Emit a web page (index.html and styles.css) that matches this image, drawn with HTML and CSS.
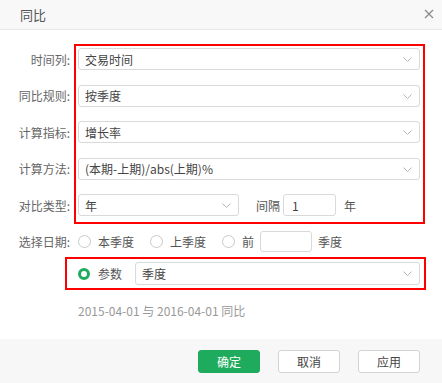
FILE: index.html
```html
<!DOCTYPE html>
<html lang="zh">
<head>
  <meta charset="UTF-8">
  <title>同比</title>
  <link rel="stylesheet" href="styles.css">
</head>
<body>
  <div class="dialog">
    <div class="head">
      <span class="title">同比</span>
      <svg class="close" width="10" height="10" viewBox="0 0 10 10"><path d="M1 1L9 9M9 1L1 9" stroke="#888" stroke-width="1.2"/></svg>
    </div>

    <div class="body">
      <div class="mark mark-a"></div>
      <div class="mark mark-b"></div>

      <div class="row">
        <label class="lbl">时间列:</label>
        <div class="select">交易时间<svg class="chev" width="9" height="5" viewBox="0 0 9 5"><path d="M0.5 0.5L4.5 4.5L8.5 0.5" fill="none" stroke="#b5b5b5"/></svg></div>
      </div>
      <div class="row">
        <label class="lbl">同比规则:</label>
        <div class="select">按季度<svg class="chev" width="9" height="5" viewBox="0 0 9 5"><path d="M0.5 0.5L4.5 4.5L8.5 0.5" fill="none" stroke="#b5b5b5"/></svg></div>
      </div>
      <div class="row">
        <label class="lbl">计算指标:</label>
        <div class="select">增长率<svg class="chev" width="9" height="5" viewBox="0 0 9 5"><path d="M0.5 0.5L4.5 4.5L8.5 0.5" fill="none" stroke="#b5b5b5"/></svg></div>
      </div>
      <div class="row">
        <label class="lbl">计算方法:</label>
        <div class="select">(本期-上期)/abs(上期)%<svg class="chev" width="9" height="5" viewBox="0 0 9 5"><path d="M0.5 0.5L4.5 4.5L8.5 0.5" fill="none" stroke="#b5b5b5"/></svg></div>
      </div>
      <div class="row">
        <label class="lbl">对比类型:</label>
        <div class="inline">
          <div class="select short">年<svg class="chev" width="9" height="5" viewBox="0 0 9 5"><path d="M0.5 0.5L4.5 4.5L8.5 0.5" fill="none" stroke="#b5b5b5"/></svg></div>
          <span class="txt gap-l">间隔</span>
          <div class="input num">1</div>
          <span class="txt">年</span>
        </div>
      </div>
      <div class="row radio-row">
        <label class="lbl">选择日期:</label>
        <div class="inline">
          <span class="radio"></span><span class="txt rtxt">本季度</span>
          <span class="radio"></span><span class="txt rtxt">上季度</span>
          <span class="radio"></span><span class="txt rtxt pre">前</span>
          <div class="input few"></div>
          <span class="txt">季度</span>
        </div>
      </div>
      <div class="row param-row">
        <span class="lbl"></span>
        <div class="inline">
          <span class="radio on"></span><span class="txt ptxt">参数</span>
          <div class="select grow">季度<svg class="chev" width="9" height="5" viewBox="0 0 9 5"><path d="M0.5 0.5L4.5 4.5L8.5 0.5" fill="none" stroke="#b5b5b5"/></svg></div>
        </div>
      </div>
      <p class="hint">2015-04-01 与 2016-04-01 同比</p>
    </div>

    <div class="foot">
      <button class="btn primary">确定</button>
      <button class="btn">取消</button>
      <button class="btn">应用</button>
    </div>
  </div>
</body>
</html>
```

FILE: styles.css
```css
body {
    margin: 0;
    background: #ffffff;
    font-family: "Noto Sans CJK SC", "Noto Sans", sans-serif;
    font-size: 12px;
    color: #444;
}

.dialog {
    width: 442px;
    height: 383px;
    display: flex;
    flex-direction: column;
}

.head {
    height: 29px;
    background: #f8f8f8;
    border-bottom: 1px solid #e9e9e9;
    display: flex;
    align-items: center;
    justify-content: space-between;
    padding: 0 8px 0 20px;
}
.title {
    font-size: 13px;
    color: #555;
}
.close {
    margin-top: -1px;
}

.body {
    position: relative;
    flex: 1;
    padding: 18px 22px 0 0;
}

/* red highlight frames drawn over the form */
.mark {
    position: absolute;
    border: 2px solid #ff0000;
    pointer-events: none;
}
.mark-a {
    left: 74px;
    top: 14px;
    width: 347px;
    height: 176px;
}
.mark-b {
    left: 65px;
    top: 227px;
    width: 357px;
    height: 29px;
}

.row {
    display: grid;
    grid-template-columns: 70px 1fr;
    column-gap: 8px;
    align-items: center;
    height: 22px;
    margin-bottom: 14.5px;
}
.lbl {
    text-align: right;
    color: #666;
    white-space: nowrap;
}

.select {
    height: 20px;
    border: 1px solid #d9d9d9;
    border-radius: 3px;
    padding-left: 6px;
    display: flex;
    align-items: center;
    position: relative;
    color: #444;
}
.chev {
    position: absolute;
    right: 7px;
    top: 8px;
}

.inline {
    display: flex;
    align-items: center;
}
.short {
    width: 153px;
}
.grow {
    flex: 1;
}
.txt {
    color: #555;
}
.gap-l {
    margin-left: 17px;
}

.input {
    border: 1px solid #d9d9d9;
    border-radius: 3px;
    padding-left: 8px;
    display: flex;
    align-items: center;
    box-sizing: border-box;
    height: 22px;
}
.num {
    width: 53px;
    margin: 0 8px 0 3px;
}
.few {
    width: 52px;
    height: 21px;
    margin: 0 6px 0 6px;
}

.radio-row {
    height: 21px;
    margin-top: 15px;
    margin-bottom: 10px;
}
.radio {
    width: 11px;
    height: 11px;
    border: 1px solid #c8c8c8;
    border-radius: 50%;
    box-sizing: content-box;
    flex: none;
}
.radio.on {
    width: 6px;
    height: 6px;
    border: 3.5px solid #1fab5d;
}
.rtxt {
    margin: 0 16px 0 7px;
}
.rtxt.pre {
    margin-right: 0;
    margin-left: 7px;
}
.param-row {
    height: 23px;
}
.param-row .select {
    height: 21px;
}
.ptxt {
    margin: 0 13px 0 8px;
}

.hint {
    margin: 0 0 0 78px;
    color: #999;
    line-height: 16px;
    position: relative;
    top: 3px;
}

.foot {
    height: 44px;
    background: #f7f7f7;
    display: flex;
    justify-content: flex-end;
    align-items: flex-start;
    gap: 18px;
    padding: 11px 22px 0 0;
    box-sizing: border-box;
}
.btn {
    width: 62px;
    height: 23px;
    border: 1px solid #d3d3d3;
    border-radius: 3px;
    background: #fff;
    font-family: inherit;
    font-size: 12px;
    color: #444;
    padding: 0;
}
.btn.primary {
    background: #1fab5d;
    border-color: #1fab5d;
    color: #fff;
}
```
